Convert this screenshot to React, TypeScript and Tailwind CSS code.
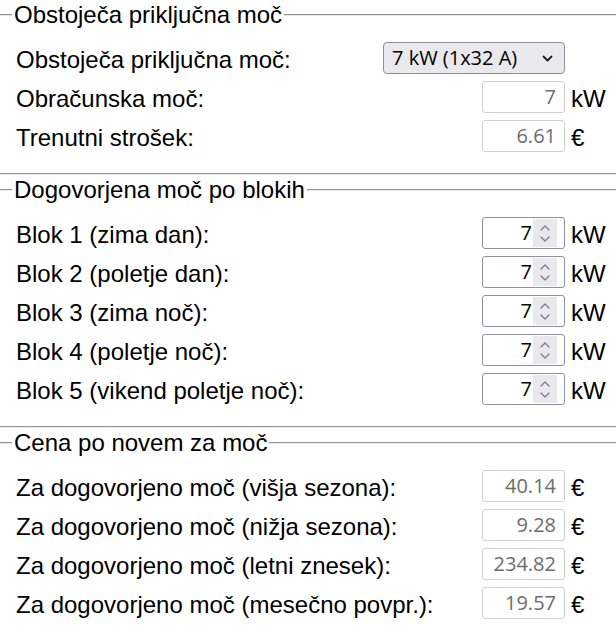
import React from "react";

const labelFont = "font-['Liberation_Sans',Arial,sans-serif]";
const ctrlFont = "font-['Open_Sans',sans-serif]";

function Spinner() {
  return (
    <div className="w-[24px] h-[28px] bg-[#e9e9ed] mr-[7px] flex flex-col items-center justify-center gap-[5px]">
      <svg width="10" height="6" viewBox="0 0 10 6" fill="none">
        <path d="M1 5 L5 1 L9 5" stroke="#7f7f89" strokeWidth="1.4" strokeLinecap="round" strokeLinejoin="round" />
      </svg>
      <svg width="10" height="6" viewBox="0 0 10 6" fill="none">
        <path d="M1 1 L5 5 L9 1" stroke="#7f7f89" strokeWidth="1.4" strokeLinecap="round" strokeLinejoin="round" />
      </svg>
    </div>
  );
}

function NumberInput({ value }: { value: string }) {
  return (
    <div className={`w-[83px] h-[32px] border border-[#8f8f9d] rounded-[3px] flex items-center bg-white ${ctrlFont}`}>
      <div className="flex-1 text-right pr-px text-[20px] leading-[30px] text-black">{value}</div>
      <Spinner />
    </div>
  );
}

function ReadInput({ value }: { value: string }) {
  return (
    <div className={`w-[83px] h-[32px] border border-[#cfcfd6] rounded-[3px] bg-white text-right pr-[8px] text-[20px] leading-[30px] text-[#6d6d6d] ${ctrlFont}`}>
      {value}
    </div>
  );
}

function Select({ value }: { value: string }) {
  return (
    <div className={`w-[182px] h-[32px] border border-[#8f8f9d] rounded-[4px] bg-[#e9e9ed] flex items-center pl-[8px] pr-[11px] ${ctrlFont}`}>
      <div className="flex-1 text-[20px] leading-[30px] text-black">{value}</div>
      <svg width="11" height="7" viewBox="0 0 11 7" fill="none">
        <path d="M1.5 1.5 L5.5 5.5 L9.5 1.5" stroke="#1a1a1a" strokeWidth="1.8" strokeLinecap="round" strokeLinejoin="round" />
      </svg>
    </div>
  );
}

function Row({ label, control, unit }: { label: string; control: React.ReactNode; unit?: string }) {
  return (
    <>
      <div className="text-[24px] leading-[27px] text-black pt-[2px]">{label}</div>
      <div className="flex justify-end">{control}</div>
      <div className="text-[24px] leading-[27px] text-black pl-[6px] pt-[2px]">{unit ?? ""}</div>
    </>
  );
}

function Group({ title, children }: { title: string; children: React.ReactNode }) {
  return (
    <fieldset className="mt-px border-t-2 border-b-2 [border-style:groove] border-[#e8e8e8] min-w-0">
      <legend className="ml-3 px-[2px] text-[24px] leading-[27px] text-black">{title}</legend>
      <div className="grid grid-cols-[1fr_auto_51px] items-center gap-y-[7px] pl-4 pt-[14px] pb-[21px]">
        {children}
      </div>
    </fieldset>
  );
}

export default function App() {
  return (
    <div className={`w-[616px] bg-white ${labelFont}`}>
      <Group title="Obstoječa priključna moč">
        <Row label="Obstoječa priključna moč:" control={<Select value="7 kW (1x32 A)" />} />
        <Row label="Obračunska moč:" control={<ReadInput value="7" />} unit="kW" />
        <Row label="Trenutni strošek:" control={<ReadInput value="6.61" />} unit="€" />
      </Group>
      <Group title="Dogovorjena moč po blokih">
        <Row label="Blok 1 (zima dan):" control={<NumberInput value="7" />} unit="kW" />
        <Row label="Blok 2 (poletje dan):" control={<NumberInput value="7" />} unit="kW" />
        <Row label="Blok 3 (zima noč):" control={<NumberInput value="7" />} unit="kW" />
        <Row label="Blok 4 (poletje noč):" control={<NumberInput value="7" />} unit="kW" />
        <Row label="Blok 5 (vikend poletje noč):" control={<NumberInput value="7" />} unit="kW" />
      </Group>
      <Group title="Cena po novem za moč">
        <Row label="Za dogovorjeno moč (višja sezona):" control={<ReadInput value="40.14" />} unit="€" />
        <Row label="Za dogovorjeno moč (nižja sezona):" control={<ReadInput value="9.28" />} unit="€" />
        <Row label="Za dogovorjeno moč (letni znesek):" control={<ReadInput value="234.82" />} unit="€" />
        <Row label="Za dogovorjeno moč (mesečno povpr.):" control={<ReadInput value="19.57" />} unit="€" />
      </Group>
    </div>
  );
}
